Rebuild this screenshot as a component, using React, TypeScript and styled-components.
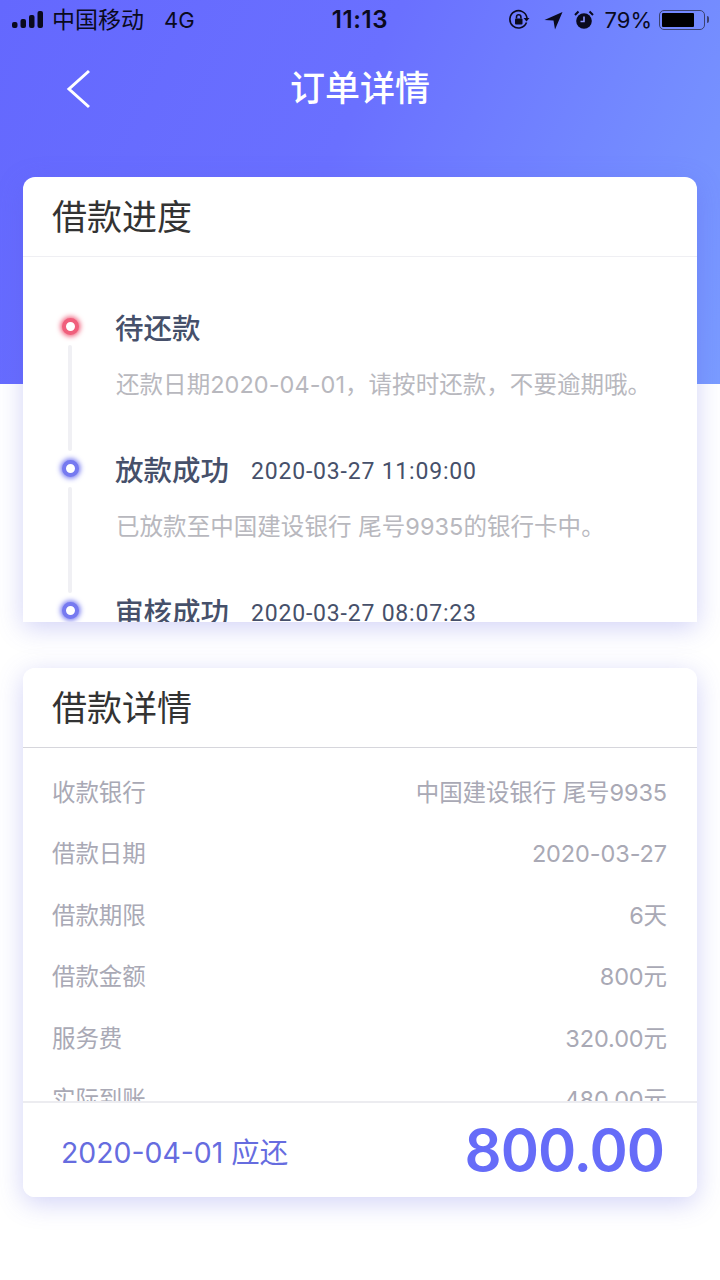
import { createGlobalStyle, styled } from "styled-components";

const GlobalStyle = createGlobalStyle`
  html, body {
    margin: 0;
    padding: 0;
    background: #fff;
  }
  * {
    box-sizing: border-box;
  }
`;

const Page = styled.div`
  width: 720px;
  height: 1280px;
  overflow: hidden;
  display: flex;
  flex-direction: column;
  font-family: "Inter", "Noto Sans CJK SC", sans-serif;
  background: linear-gradient(115deg, #6468fe 0%, #6a70ff 45%, #7a9cff 100%) top / 100% 384px no-repeat;
`;

const StatusBar = styled.div`
  height: 40px;
  padding: 0 12px;
  display: grid;
  grid-template-columns: 1fr auto 1fr;
  align-items: center;
  color: #0a0a1e;
  font-size: 22px;
  line-height: 40px;
`;

const StatusLeft = styled.div`
  display: flex;
  align-items: center;
  gap: 8px;
`;

const Carrier = styled.span`
  margin-right: 12px;
  font-size: 23px;
`;

const StatusTime = styled.div`
  font-size: 24px;
  font-weight: 600;
  letter-spacing: 0.6px;
`;

const StatusRight = styled.div`
  display: flex;
  align-items: center;
  justify-content: flex-end;
  gap: 11px;
  padding-right: 1px;
`;

const LockSlot = styled.div`
  display: flex;
  margin-right: 3px;
`;

const BatteryShell = styled.div`
  width: 46px;
  height: 20px;
  margin-left: -4px;
  margin-right: 2px;
  padding: 2px;
  border: 1.5px solid #3b4270;
  border-radius: 5px;
  position: relative;
  &::after {
    content: "";
    position: absolute;
    right: -5px;
    top: 5px;
    width: 2px;
    height: 7px;
    background: #3b4270;
    border-radius: 0 2px 2px 0;
  }
`;

const BatteryFill = styled.div<{ $level: number }>`
  width: ${(p) => p.$level}%;
  height: 100%;
  background: #000;
  border-radius: 1px;
`;

const NavBar = styled.div`
  height: 97px;
  padding-left: 66px;
  margin-bottom: 40px;
  position: relative;
  display: flex;
  align-items: center;
`;

const NavTitle = styled.div`
  position: absolute;
  left: 0;
  right: 0;
  top: 25px;
  text-align: center;
  color: #fff;
  font-size: 35px;
  line-height: 46px;
  font-weight: 500;
`;

const Card = styled.section<{ $height: number; $round?: boolean }>`
  flex: none;
  width: 674px;
  height: ${(p) => p.$height}px;
  display: flex;
  flex-direction: column;
  overflow: hidden;
  background: #fff;
  border-radius: ${(p) => (p.$round ? "12px" : "12px 12px 0 0")};
`;

const CardShadow = styled.div<{ $round?: boolean; $gap?: number }>`
  flex: none;
  width: 674px;
  margin: 0 23px ${(p) => p.$gap ?? 0}px;
  border-radius: ${(p) => (p.$round ? "12px" : "12px 12px 0 0")};
  box-shadow: 0 6px 26px rgba(90, 94, 225, 0.27);
`;

const CardHeader = styled.div<{ $strong?: boolean }>`
  flex: none;
  height: 80px;
  padding: 0 0 5px 29px;
  display: flex;
  align-items: center;
  color: #333;
  font-size: 35px;
  border-bottom: 1px solid ${(p) => (p.$strong ? "#d6d6dc" : "#efeff3")};
`;

const Timeline = styled.div`
  padding: 50px 0 0 29px;
`;

const Step = styled.div`
  display: grid;
  grid-template-columns: 63px 1fr;
  height: 142px;
`;

const Rail = styled.div`
  display: flex;
  flex-direction: column;
  align-items: center;
  width: 36px;
`;

const Dot = styled.div<{ $color: string }>`
  flex: none;
  width: 17px;
  height: 17px;
  margin: 11px 0 10px;
  border-radius: 50%;
  background: #fff;
  border: 4px solid ${(p) => p.$color};
  box-shadow: 0 0 5px 1.5px ${(p) => p.$color};
  opacity: 0.85;
`;

const Line = styled.div`
  flex: none;
  width: 4px;
  height: 106px;
  border-radius: 2px;
  background: #f0f0f4;
`;

const StepBody = styled.div`
  display: flex;
  flex-direction: column;
`;

const StepHead = styled.div`
  display: flex;
  align-items: center;
  gap: 22px;
  height: 38px;
`;

const StepTitle = styled.div`
  color: #46506a;
  font-size: 28.5px;
  font-weight: 500;
`;

const StepTime = styled.div`
  color: #46506a;
  font-family: "Roboto", sans-serif;
  font-size: 23px;
  letter-spacing: 0.8px;
  padding-top: 6px;
`;

const StepNote = styled.div`
  margin-top: 24px;
  padding-left: 1px;
  color: #b8b8be;
  font-size: 23.5px;
  letter-spacing: 0.05px;
  line-height: 32px;
  white-space: nowrap;
`;

const Rows = styled.div`
  flex: 1;
  min-height: 0;
  overflow: hidden;
  padding: 14px 30px 0 29px;
`;

const Row = styled.div`
  height: 61.5px;
  display: flex;
  align-items: center;
  justify-content: space-between;
  color: #a9a9b5;
  font-size: 23.5px;
  letter-spacing: -0.1px;
  line-height: 32px;
`;

const Footer = styled.div`
  flex: none;
  height: 96px;
  padding: 0 33px 0 38px;
  display: flex;
  align-items: center;
  justify-content: space-between;
  border-top: 2px solid #ececf0;
`;

const DueDate = styled.div`
  color: #666cdf;
  font-size: 28.4px;
`;

const Amount = styled.div`
  color: #666cf8;
  font-size: 58px;
  font-weight: 600;
  letter-spacing: -1px;
`;

const steps = [
  { title: "待还款", time: "", note: "还款日期2020-04-01，请按时还款，不要逾期哦。", color: "#ee4466" },
  { title: "放款成功", time: "2020-03-27 11:09:00", note: "已放款至中国建设银行 尾号9935的银行卡中。", color: "#5f63ee" },
  { title: "审核成功", time: "2020-03-27 08:07:23", note: "", color: "#5f63ee" },
];

const rows = [
  ["收款银行", "中国建设银行 尾号9935"],
  ["借款日期", "2020-03-27"],
  ["借款期限", "6天"],
  ["借款金额", "800元"],
  ["服务费", "320.00元"],
  ["实际到账", "480.00元"],
];

function SignalIcon() {
  return (
    <svg width="32" height="18" viewBox="0 0 32 18" fill="#0a0a1e">
      <rect x="0" y="11" width="5.5" height="6" rx="2" />
      <rect x="8.5" y="8" width="5.5" height="9" rx="2" />
      <rect x="17" y="4" width="5.5" height="13" rx="2" />
      <rect x="25.5" y="0" width="5.5" height="17" rx="2" />
    </svg>
  );
}

function LockIcon() {
  return (
    <svg width="22" height="22" viewBox="0 0 22 22" fill="none" stroke="#0a0a1e" strokeWidth="1.6">
      <path d="M18.5 13.5A8.6 8.6 0 1 1 19 9" />
      <path d="M15.5 9h6l-3 3.4z" fill="#0a0a1e" stroke="none" />
      <rect x="7" y="9.5" width="7.5" height="6" rx="1" fill="#0a0a1e" stroke="none" />
      <path d="M8.5 9.5V8a2.2 2.2 0 0 1 4.4 0v1.5" />
    </svg>
  );
}

function ArrowIcon() {
  return (
    <svg width="19" height="19" viewBox="0 0 19 19" fill="#0a0a1e">
      <path d="M18.5 1 L0.5 9 L9.5 9.5 L11 18.5 Z" />
    </svg>
  );
}

function AlarmIcon() {
  return (
    <svg width="20" height="20" viewBox="0 0 20 20">
      <circle cx="10" cy="11" r="7.8" fill="#0a0a1e" />
      <path d="M10 6.5V11.5H6.5" fill="none" stroke="#8a93ff" strokeWidth="1.6" />
      <path d="M1 5 L4.5 1.5M19 5 L15.5 1.5" stroke="#0a0a1e" strokeWidth="2" />
    </svg>
  );
}

function BackIcon() {
  return (
    <svg width="24" height="40" viewBox="0 0 24 40" fill="none" stroke="#fff" strokeWidth="3">
      <path d="M23 2 L3 20 L23 38" />
    </svg>
  );
}

export default function App() {
  return (
    <Page>
      <GlobalStyle />
      <StatusBar>
        <StatusLeft>
          <SignalIcon />
          <Carrier>中国移动</Carrier>
          <span>4G</span>
        </StatusLeft>
        <StatusTime>11:13</StatusTime>
        <StatusRight>
          <LockSlot>
            <LockIcon />
          </LockSlot>
          <ArrowIcon />
          <AlarmIcon />
          <span>79%</span>
          <BatteryShell>
            <BatteryFill $level={79} />
          </BatteryShell>
        </StatusRight>
      </StatusBar>
      <NavBar>
        <BackIcon />
        <NavTitle>订单详情</NavTitle>
      </NavBar>
      <CardShadow $gap={46}>
        <Card $height={445}>
          <CardHeader>借款进度</CardHeader>
          <Timeline>
            {steps.map((s, i) => (
              <Step key={s.title}>
                <Rail>
                  <Dot $color={s.color} />
                  {i < steps.length - 1 && <Line />}
                </Rail>
                <StepBody>
                  <StepHead>
                    <StepTitle>{s.title}</StepTitle>
                    {s.time && <StepTime>{s.time}</StepTime>}
                  </StepHead>
                  <StepNote>{s.note}</StepNote>
                </StepBody>
              </Step>
            ))}
          </Timeline>
        </Card>
      </CardShadow>
      <CardShadow $round>
        <Card $height={529} $round>
          <CardHeader $strong>借款详情</CardHeader>
          <Rows>
            {rows.map(([label, value]) => (
              <Row key={label}>
                <span>{label}</span>
                <span>{value}</span>
              </Row>
            ))}
          </Rows>
          <Footer>
            <DueDate>2020-04-01 应还</DueDate>
            <Amount>800.00</Amount>
          </Footer>
        </Card>
      </CardShadow>
    </Page>
  );
}
